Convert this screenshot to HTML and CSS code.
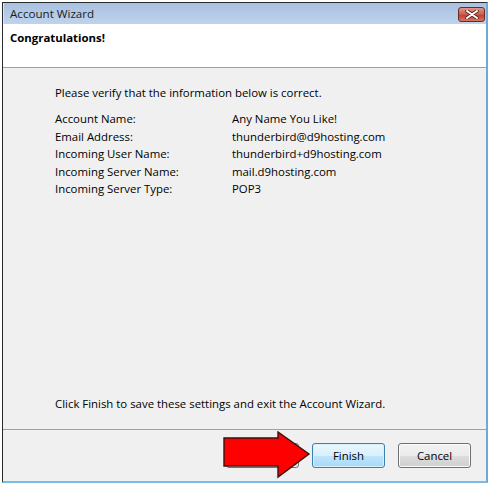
FILE: index.html
```html
<!DOCTYPE html>
<html>
<head>
<meta charset="utf-8">
<link rel="stylesheet" href="styles.css">
</head>
<body>
<div class="window">
  <div class="titlebar">
    <span class="title">Account Wizard</span>
    <div class="close">
      <svg width="14" height="9" viewBox="0 0 14 9"><path d="M2 1 L12 8 M12 1 L2 8" stroke="#5a2020" stroke-width="3.6" stroke-linecap="round"/><path d="M2 1 L12 8 M12 1 L2 8" stroke="#ffffff" stroke-width="2" stroke-linecap="round"/></svg>
    </div>
  </div>
  <div class="header">Congratulations!</div>
  <div class="content">
    <p class="intro">Please verify that the information below is correct.</p>
    <div class="info">
      <span>Account Name:</span><span>Any Name You Like!</span>
      <span>Email Address:</span><span>thunderbird@d9hosting.com</span>
      <span>Incoming User Name:</span><span>thunderbird+d9hosting.com</span>
      <span>Incoming Server Name:</span><span>mail.d9hosting.com</span>
      <span>Incoming Server Type:</span><span>POP3</span>
    </div>
    <p class="outro">Click Finish to save these settings and exit the Account Wizard.</p>
  </div>
  <div class="footer">
    <button class="btn back"></button>
    <button class="btn finish">Finish</button>
    <button class="btn">Cancel</button>
    <svg class="arrow" width="88" height="48" viewBox="0 0 88 48"><polygon points="1,7 55,7 55,1 86,23 55,46 55,35 1,35" fill="#ff0000" stroke="#3a1010" stroke-width="1.4"/></svg>
  </div>
</div>
</body>
</html>
```
FILE: styles.css
```css
html, body { margin: 0; padding: 0; background: #ffffff; }
body {
  width: 490px; height: 484px; overflow: hidden;
  font-family: "Open Sans", "Noto Sans", sans-serif;
  font-size: 11.4px; color: #000;
}
.window {
  margin: 2px 0 0 2px;
  width: 483px; height: 478px;
  border-left: 1px solid #2a2a2a;
  border-top: 1px solid #2a2a2a;
  border-right: 2px solid #6fa9d8;
  border-bottom: 2px solid #79bde6;
  display: flex; flex-direction: column;
  background: #f0f0f0;
}
.titlebar {
  height: 21px;
  background: linear-gradient(#a9c1e0, #bfd3ec);
  display: flex; align-items: center; justify-content: space-between;
  padding: 0 1px 0 6px;
  border-left: 1px solid #dce7f3;
}
.title { font-size: 11.6px; color: #1b1b1b; }
.close {
  width: 27px; height: 15px; box-sizing: border-box;
  border: 1px solid #6b2a2a; border-radius: 3px;
  background: linear-gradient(#e09a8a, #c95b48 50%, #b8402d 51%, #d87561);
  display: flex; align-items: center; justify-content: center;
  margin-top: 1px;
}
.header {
  height: 44px; background: #fff;
  border-bottom: 1px solid #a0a0a0;
  font-weight: bold; font-size: 11.4px;
  padding: 6px 0 0 7px; box-sizing: border-box;
}
.content {
  flex: 1; padding-left: 52px;
  display: flex; flex-direction: column;
}
.intro { margin: 16px 0 0 0; line-height: 17px; }
.info {
  margin-top: 9px;
  display: grid; grid-template-columns: 177px auto;
  line-height: 17.6px;
}
.outro { margin: auto 0 17px 0; line-height: 17px; }
.footer {
  height: 52px; box-sizing: border-box;
  border-top: 1px solid #a0a0a0;
  display: flex; justify-content: flex-end; align-items: flex-start;
  gap: 13px; padding: 13px 15px 0 0;
  position: relative;
}
.btn {
  width: 73px; height: 25px;
  font-family: inherit; font-size: 11.4px; color: #000;
  border: 1px solid #707070; border-radius: 3px;
  background: linear-gradient(#f2f2f2, #ebebeb 50%, #dddddd 51%, #cfcfcf);
  box-shadow: inset 0 0 0 1px #fbfbfb;
  padding: 0;
}
.finish {
  border-color: #3c7fb1;
  background: linear-gradient(#eaf6fd, #d9f0fc 50%, #bee6fd 51%, #a7d9f5);
  box-shadow: inset 0 0 0 1px #d8f0fa;
}
.arrow { position: absolute; left: 220px; top: 1px; }
```
